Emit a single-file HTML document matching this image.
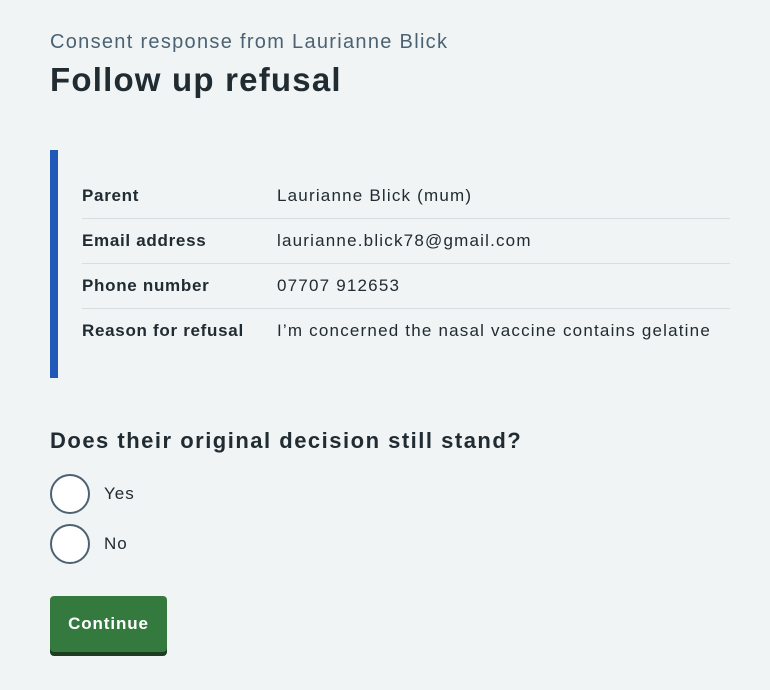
<!DOCTYPE html>
<html><head><meta charset="utf-8"><style>
body{margin:0;background:#f0f4f5;font-family:"Liberation Sans",Arial,sans-serif;color:#212b32;width:770px;height:690px;overflow:hidden;position:relative}
.abs{position:absolute;white-space:nowrap}
.cap{left:50px;top:31px;font-size:20px;color:#4c6272;letter-spacing:1.3px}
h1{position:absolute;left:50px;top:61px;margin:0;font-size:33px;font-weight:bold;letter-spacing:1.2px}
.card{position:absolute;left:50px;top:150px;width:680px;height:228px;border-left:8px solid #2059b8}
.row{position:absolute;left:24px;width:648px;height:45px;font-size:17px;letter-spacing:1.2px}
.row .k{position:absolute;left:0;top:0;font-weight:bold;line-height:45px;letter-spacing:0.7px}
.row .v{position:absolute;left:195px;top:0;line-height:45px}
.line{border-bottom:1px solid #d8dde0}
h2{position:absolute;left:50px;top:428px;margin:0;font-size:22px;font-weight:bold;letter-spacing:1.5px}
.radio{position:absolute;left:50px;width:36px;height:36px;border:2px solid #4c6272;border-radius:50%;background:#fff}
.rl{position:absolute;left:104px;font-size:17px;letter-spacing:1px}
.btn{position:absolute;left:50px;top:596px;width:117px;height:56px;background:#347a3f;border-radius:4px;box-shadow:0 4px 0 #1d3c22;color:#fff;font-weight:bold;font-size:17px;text-align:center;line-height:55px;letter-spacing:0.9px}
</style></head><body>
<div class="abs cap">Consent response from Laurianne Blick</div>
<h1>Follow up refusal</h1>
<div class="card">
<div class="row line" style="top:23px"><span class="k">Parent</span><span class="v">Laurianne Blick (mum)</span></div>
<div class="row line" style="top:68px"><span class="k">Email address</span><span class="v">laurianne.blick78@gmail.com</span></div>
<div class="row line" style="top:113px"><span class="k">Phone number</span><span class="v">07707 912653</span></div>
<div class="row" style="top:158px"><span class="k">Reason for refusal</span><span class="v">I’m concerned the nasal vaccine contains gelatine</span></div>
</div>
<h2>Does their original decision still stand?</h2>
<div class="radio" style="top:474px"></div><div class="abs rl" style="top:484px">Yes</div>
<div class="radio" style="top:524px"></div><div class="abs rl" style="top:534px">No</div>
<div class="btn">Continue</div>
</body></html>
